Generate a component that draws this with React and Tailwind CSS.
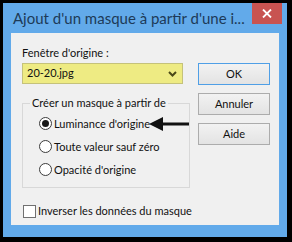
import React from "react";

function Radio({ checked, label, arrow }) {
  return (
    <div className="flex items-center h-[23px] whitespace-nowrap">
      <span className="w-[13px] h-[13px] rounded-full border border-[#3c3c3c] bg-white flex items-center justify-center shrink-0">
        {checked && <span className="w-[7px] h-[7px] rounded-full bg-[#1a1a1a]" />}
      </span>
      <span className="ml-[2px] leading-none">{label}</span>
      {arrow && (
        <svg width="40" height="16" viewBox="0 0 40 16" className="ml-[-1px] shrink-0">
          <polygon points="0,8 14,1 14,15" fill="#111" />
          <rect x="12" y="6.5" width="28" height="3" fill="#111" />
        </svg>
      )}
    </div>
  );
}

function Btn({ children, def }) {
  return (
    <div
      className={
        "h-[22px] w-[72px] flex items-center justify-center border bg-gradient-to-b from-[#f2f2f2] to-[#e3e3e3] " +
        (def ? "border-[#4f9fe6]" : "border-[#acacac]")
      }
    >
      {children}
    </div>
  );
}

export default function App() {
  return (
    <div
      className="w-[292px] h-[242px] bg-black pt-[3px] pl-[3px] text-[11px] text-[#111]"
      style={{ fontFamily: 'Lato, "Liberation Sans", sans-serif' }}
    >
      <div className="w-[284px] h-[234px] bg-[#62aaea] flex flex-col px-[8px] pb-[12px]">
        <div className="h-[30px] flex items-start relative">
          <span className="pl-[2px] pt-[5px] text-[15px] text-[#1d3a58] leading-[20px] whitespace-nowrap">
            Ajout d'un masque à partir d'une i...
          </span>
          <div className="absolute right-[-3px] top-0 w-[30px] h-[21px] bg-[#c85351] flex items-center justify-center">
            <svg width="10" height="9" viewBox="0 0 10 9">
              <path d="M1 0.5 L9 8.5 M9 0.5 L1 8.5" stroke="white" strokeWidth="1.8" />
            </svg>
          </div>
        </div>
        <div className="flex-1 bg-[#f0f0f0] flex pl-[11px]">
          <div className="w-[161px] flex flex-col">
            <div className="mt-[12px] h-[16px] leading-[16px] whitespace-nowrap">Fenêtre d'origine :</div>
            <div className="mt-[2px] h-[21px] bg-[#eeeb83] border border-[#c5c27a] flex items-center pl-[4px] pr-[5px]">
              <span className="flex-1">20-20.jpg</span>
              <svg width="9" height="6" viewBox="0 0 9 6">
                <path d="M1 1 L4.5 4.5 L8 1" stroke="#4a4818" strokeWidth="2" fill="none" />
              </svg>
            </div>
            <fieldset className="mt-[12px] border border-[#d8d8d8] h-[92px] pl-[7px] pt-[2px] m-0">
              <legend className="px-[2px] leading-[14px] whitespace-nowrap">Créer un masque à partir de</legend>
              <div className="flex flex-col pl-[9px]">
                <Radio checked label="Luminance d'origine" arrow />
                <Radio label="Toute valeur sauf zéro" />
                <Radio label="Opacité d'origine" />
              </div>
            </fieldset>
            <div className="mt-[15px] flex items-center pl-[1px] whitespace-nowrap">
              <span className="w-[13px] h-[13px] border border-[#707070] bg-white shrink-0" />
              <span className="ml-[2px]">Inverser les données du masque</span>
            </div>
          </div>
          <div className="ml-[15px] mt-[30px] flex flex-col gap-[8px]">
            <Btn def>OK</Btn>
            <Btn>Annuler</Btn>
            <Btn>Aide</Btn>
          </div>
        </div>
      </div>
    </div>
  );
}
